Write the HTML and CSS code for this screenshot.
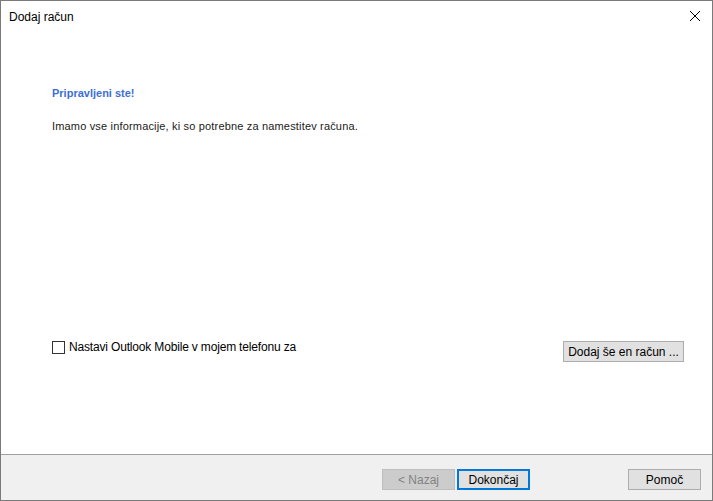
FILE: index.html
```html
<!DOCTYPE html>
<html>
<head>
<meta charset="utf-8">
<link rel="stylesheet" href="styles.css">
</head>
<body>
<div class="window">
  <div class="titlebar">
    <span class="title">Dodaj račun</span>
    <svg class="close" width="12" height="12" viewBox="0 0 12 12"><path d="M1 1 L11 11 M11 1 L1 11" stroke="#000" stroke-width="1" fill="none"/></svg>
  </div>
  <div class="content">
    <div class="heading">Pripravljeni ste!</div>
    <div class="info">Imamo vse informacije, ki so potrebne za namestitev računa.</div>
    <div class="spacer"></div>
    <div class="row">
      <label class="check"><span class="box"></span><span>Nastavi Outlook Mobile v mojem telefonu za</span></label>
      <button class="btn">Dodaj še en račun ...</button>
    </div>
  </div>
  <div class="footer">
    <button class="btn disabled">&lt; Nazaj</button>
    <button class="btn primary">Dokončaj</button>
    <div class="grow"></div>
    <button class="btn">Pomoč</button>
  </div>
</div>
</body>
</html>
```
FILE: styles.css
```css
html, body { margin: 0; padding: 0; background: #fff; }
.window {
  width: 713px; height: 501px; box-sizing: border-box;
  border: 1px solid #7a7a7a;
  display: flex; flex-direction: column;
  font-family: "Liberation Sans", Arial, sans-serif;
  color: #000;
}
.titlebar {
  height: 30px; display: flex; align-items: center; justify-content: space-between;
  padding: 0 11px 0 8px;
}
.title { font-size: 12px; margin-top: 1px; }
.content {
  flex: 1; background: #fff; display: flex; flex-direction: column;
  padding: 55px 28px 92px 51px;
}
.heading { color: #3d6fd6; font-weight: bold; font-size: 11px; line-height: 14px; }
.info { font-size: 11px; line-height: 14px; margin-top: 19px; color: #1a1a1a; letter-spacing: 0.17px; }
.spacer { flex: 1; }
.row { display: flex; justify-content: space-between; align-items: flex-start; }
.check { display: flex; align-items: center; font-size: 12px; gap: 4px; letter-spacing: -0.17px; }
.box { width: 11px; height: 11px; border: 1px solid #333; background: #fff; display: inline-block; }
.btn {
  font-family: "Liberation Sans", Arial, sans-serif; font-size: 12px;
  height: 21px; box-sizing: border-box; white-space: nowrap;
  background: #e1e1e1; border: 1px solid #adadad; color: #000;
  padding: 0; margin: 0;
}
.row .btn { margin-top: 1px; width: 121px; }
.footer {
  height: 46px; box-sizing: border-box; background: #f0f0f0;
  border-top: 1px solid #a0a0a0;
  display: flex; align-items: flex-start; padding: 14px 11px 0 381px; gap: 2px;
}
.footer .btn { width: 73px; }
.btn.disabled { background: #cccccc; border-color: #bfbfbf; color: #838383; }
.btn.primary { border: 2px solid #0078d7; }
.grow { flex: 1; }
```
